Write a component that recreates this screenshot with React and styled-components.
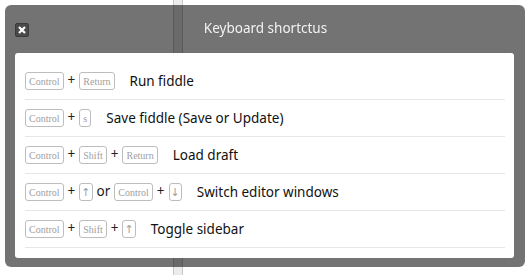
import React from 'react';
import styled, { createGlobalStyle } from 'styled-components';

const GlobalStyle = createGlobalStyle`
  html, body {
    margin: 0;
    padding: 0;
    height: 100%;
    background: #fff;
    font-family: "Noto Sans", "Open Sans", sans-serif;
  }
  #root {
    height: 100%;
  }
`;

const Page = styled.div`
  display: flex;
  height: 100%;
`;

const Pane = styled.div`
  flex: ${(p) => (p.$fixed ? `0 0 ${p.$fixed}px` : '1')};
  background: #fff;
`;

const Splitter = styled.div`
  flex: 0 0 8px;
  background: #ececec;
  border-left: 1px solid #c8c8c8;
  border-right: 1px solid #c8c8c8;
`;

const Overlay = styled.div`
  position: fixed;
  left: 5px;
  top: 5px;
  width: 520px;
  height: 262px;
  box-sizing: border-box;
  padding: 0 11px 9px 10px;
  background: rgba(0, 0, 0, 0.55);
  border-radius: 6px;
  display: flex;
  flex-direction: column;
`;

const DialogHead = styled.header`
  position: relative;
  height: 48px;
  display: flex;
  align-items: center;
  justify-content: center;
`;

const CloseButton = styled.button`
  position: absolute;
  left: 0;
  top: 18px;
  width: 14px;
  height: 14px;
  padding: 0;
  border: 1px solid #3a3a3a;
  background: #4a4a4a;
  border-radius: 2px;
  display: flex;
  align-items: center;
  justify-content: center;
`;

const Title = styled.h1`
  margin: 0 0 0 2px;
  font-size: 13.5px;
  font-weight: 400;
  color: #f2f2f2;
  line-height: 1;
`;

const Body = styled.div`
  flex: 1;
  background: #fff;
  border-radius: 3px;
  padding: 10px 9px 0 10px;
`;

const Row = styled.div`
  display: flex;
  align-items: center;
  height: 36px;
  border-bottom: 1px solid #e6e6e6;
`;

const Keys = styled.span`
  display: flex;
  align-items: center;
  gap: 4px;
  margin-right: 15px;
`;

const Kbd = styled.kbd`
  display: inline-flex;
  align-items: center;
  justify-content: center;
  box-sizing: border-box;
  height: 18px;
  min-width: 12px;
  padding: ${(p) => (p.$arrow ? '0 1px' : '0 3px')};
  border: 1px solid #bdbdbd;
  border-radius: 3px;
  font-family: ${(p) => (p.$arrow ? '"DejaVu Sans", sans-serif' : '"Liberation Serif", serif')};
  font-size: ${(p) => (p.$arrow ? '11px' : '10px')};
  color: #a0a0a0;
  background: #fff;
`;

const Plus = styled.span`
  font-size: 13.5px;
  color: #222;
  line-height: 1;
`;

const Label = styled.span`
  font-size: 13.5px;
  color: #111;
`;

const shortcuts = [
  { keys: [['Control', 'Return']], label: 'Run fiddle' },
  { keys: [['Control', 's']], label: 'Save fiddle (Save or Update)' },
  { keys: [['Control', 'Shift', 'Return']], label: 'Load draft' },
  { keys: [['Control', '↑'], ['Control', '↓']], label: 'Switch editor windows' },
  { keys: [['Control', 'Shift', '↑']], label: 'Toggle sidebar' },
];

const Combo = ({ combo }) =>
  combo.map((k, i) => (
    <React.Fragment key={i}>
      {i > 0 && <Plus>+</Plus>}
      <Kbd $arrow={k === '↑' || k === '↓'}>{k}</Kbd>
    </React.Fragment>
  ));

export default function App() {
  return (
    <>
      <GlobalStyle />
      <Page>
        <Pane $fixed={173} />
        <Splitter />
        <Pane />
      </Page>
      <Overlay>
        <DialogHead>
          <CloseButton aria-label="close">
            <svg width="8" height="8" viewBox="0 0 8 8">
              <path d="M1 1L7 7M7 1L1 7" stroke="#fff" strokeWidth="2.2" />
            </svg>
          </CloseButton>
          <Title>Keyboard shortctus</Title>
        </DialogHead>
        <Body>
          {shortcuts.map((s, i) => (
            <Row key={i}>
              <Keys>
                {s.keys.map((combo, j) => (
                  <React.Fragment key={j}>
                    {j > 0 && <Plus>or</Plus>}
                    <Combo combo={combo} />
                  </React.Fragment>
                ))}
              </Keys>
              <Label>{s.label}</Label>
            </Row>
          ))}
        </Body>
      </Overlay>
    </>
  );
}
